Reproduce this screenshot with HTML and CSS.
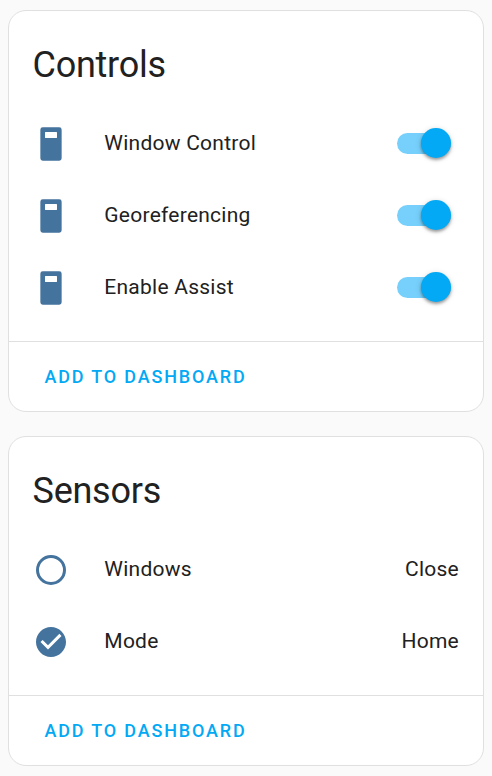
FILE: index.html
```html
<!DOCTYPE html>
<html lang="en">
<head>
<meta charset="utf-8">
<title>Device</title>
<link rel="stylesheet" href="styles.css">
</head>
<body>
<svg class="defs"><symbol id="remote" viewBox="0 0 24 24"><path fill-rule="evenodd" d="M6.500 .9h11q1.600 0 1.600 1.600v19q0 1.600-1.600 1.600h-11q-1.600 0-1.600-1.600v-19q0-1.600 1.600-1.600zM8.300 4q-.3 0-.3.3v3.400q0 .3.3.3h7.400q.3 0 .3-.3V4.300q0-.3-.3-.3z"/></symbol></svg>
<main>
<section class="card">
<h1>Controls</h1>
<div class="rows">
<div class="row"><svg class="icon"><use href="#remote"/></svg><span class="name">Window Control</span><span class="toggle"></span></div>
<div class="row"><svg class="icon"><use href="#remote"/></svg><span class="name">Georeferencing</span><span class="toggle"></span></div>
<div class="row"><svg class="icon"><use href="#remote"/></svg><span class="name">Enable Assist</span><span class="toggle"></span></div>
</div>
<footer><button>ADD TO DASHBOARD</button></footer>
</section>
<section class="card">
<h1>Sensors</h1>
<div class="rows">
<div class="row"><svg class="icon" viewBox="0 0 24 24"><path d="M12 20a8 8 0 1 1 0-16 8 8 0 0 1 0 16m0-18a10 10 0 1 0 0 20 10 10 0 0 0 0-20z"/></svg><span class="name">Windows</span><span class="value">Close</span></div>
<div class="row"><svg class="icon" viewBox="0 0 24 24"><path d="M12 2C6.500 2 2 6.500 2 12s4.500 10 10 10 10-4.500 10-10S17.500 2 12 2m-2 15-5-5 1.410-1.410L10 14.170l7.590-7.590L19 8z"/></svg><span class="name">Mode</span><span class="value">Home</span></div>
</div>
<footer><button>ADD TO DASHBOARD</button></footer>
</section>
</main>
</body>
</html>
```
FILE: styles.css
```css
* { box-sizing: border-box; }
body { margin: 0; background: #fafafa; color: #212121; font-family: Roboto, sans-serif; }
.defs { display: none; }
main { display: flex; flex-direction: column; gap: 24px; padding: 10px 8px; }
.card { background: #fff; border: 1px solid #e0e0e0; border-radius: 18px; }
h1 { margin: 0; padding: 24px 23.5px 0; height: 96px; font-size: 36px; line-height: 60px; font-weight: 400; letter-spacing: -0.25px; }
.rows { display: flex; flex-direction: column; gap: 12px; padding: 6px 24px 24px; }
.row { display: flex; align-items: center; height: 60px; font-size: 21px; letter-spacing: .25px; }
.icon { width: 36px; height: 36px; margin-top: 2px; fill: #44739e; }
.name { flex: 1; margin-left: 35.3px; }
.toggle { position: relative; width: 54px; height: 21px; margin-right: 8px; border-radius: 11px; background: #76d0fb; }
.toggle::after { content: ""; position: absolute; right: 0; top: -5px; width: 30px; height: 30px; border-radius: 50%; background: #03a9f4; box-shadow: 0 2px 3px #0005, 0 1px 6px #0002; }
footer { height: 70px; border-top: 1px solid #e0e0e0; padding: 7px 23.5px; }
button { height: 54px; padding: 0 12px; border: 0; background: none; color: #03a9f4; font: 500 18px Roboto, sans-serif; letter-spacing: 1.82px; }
```
